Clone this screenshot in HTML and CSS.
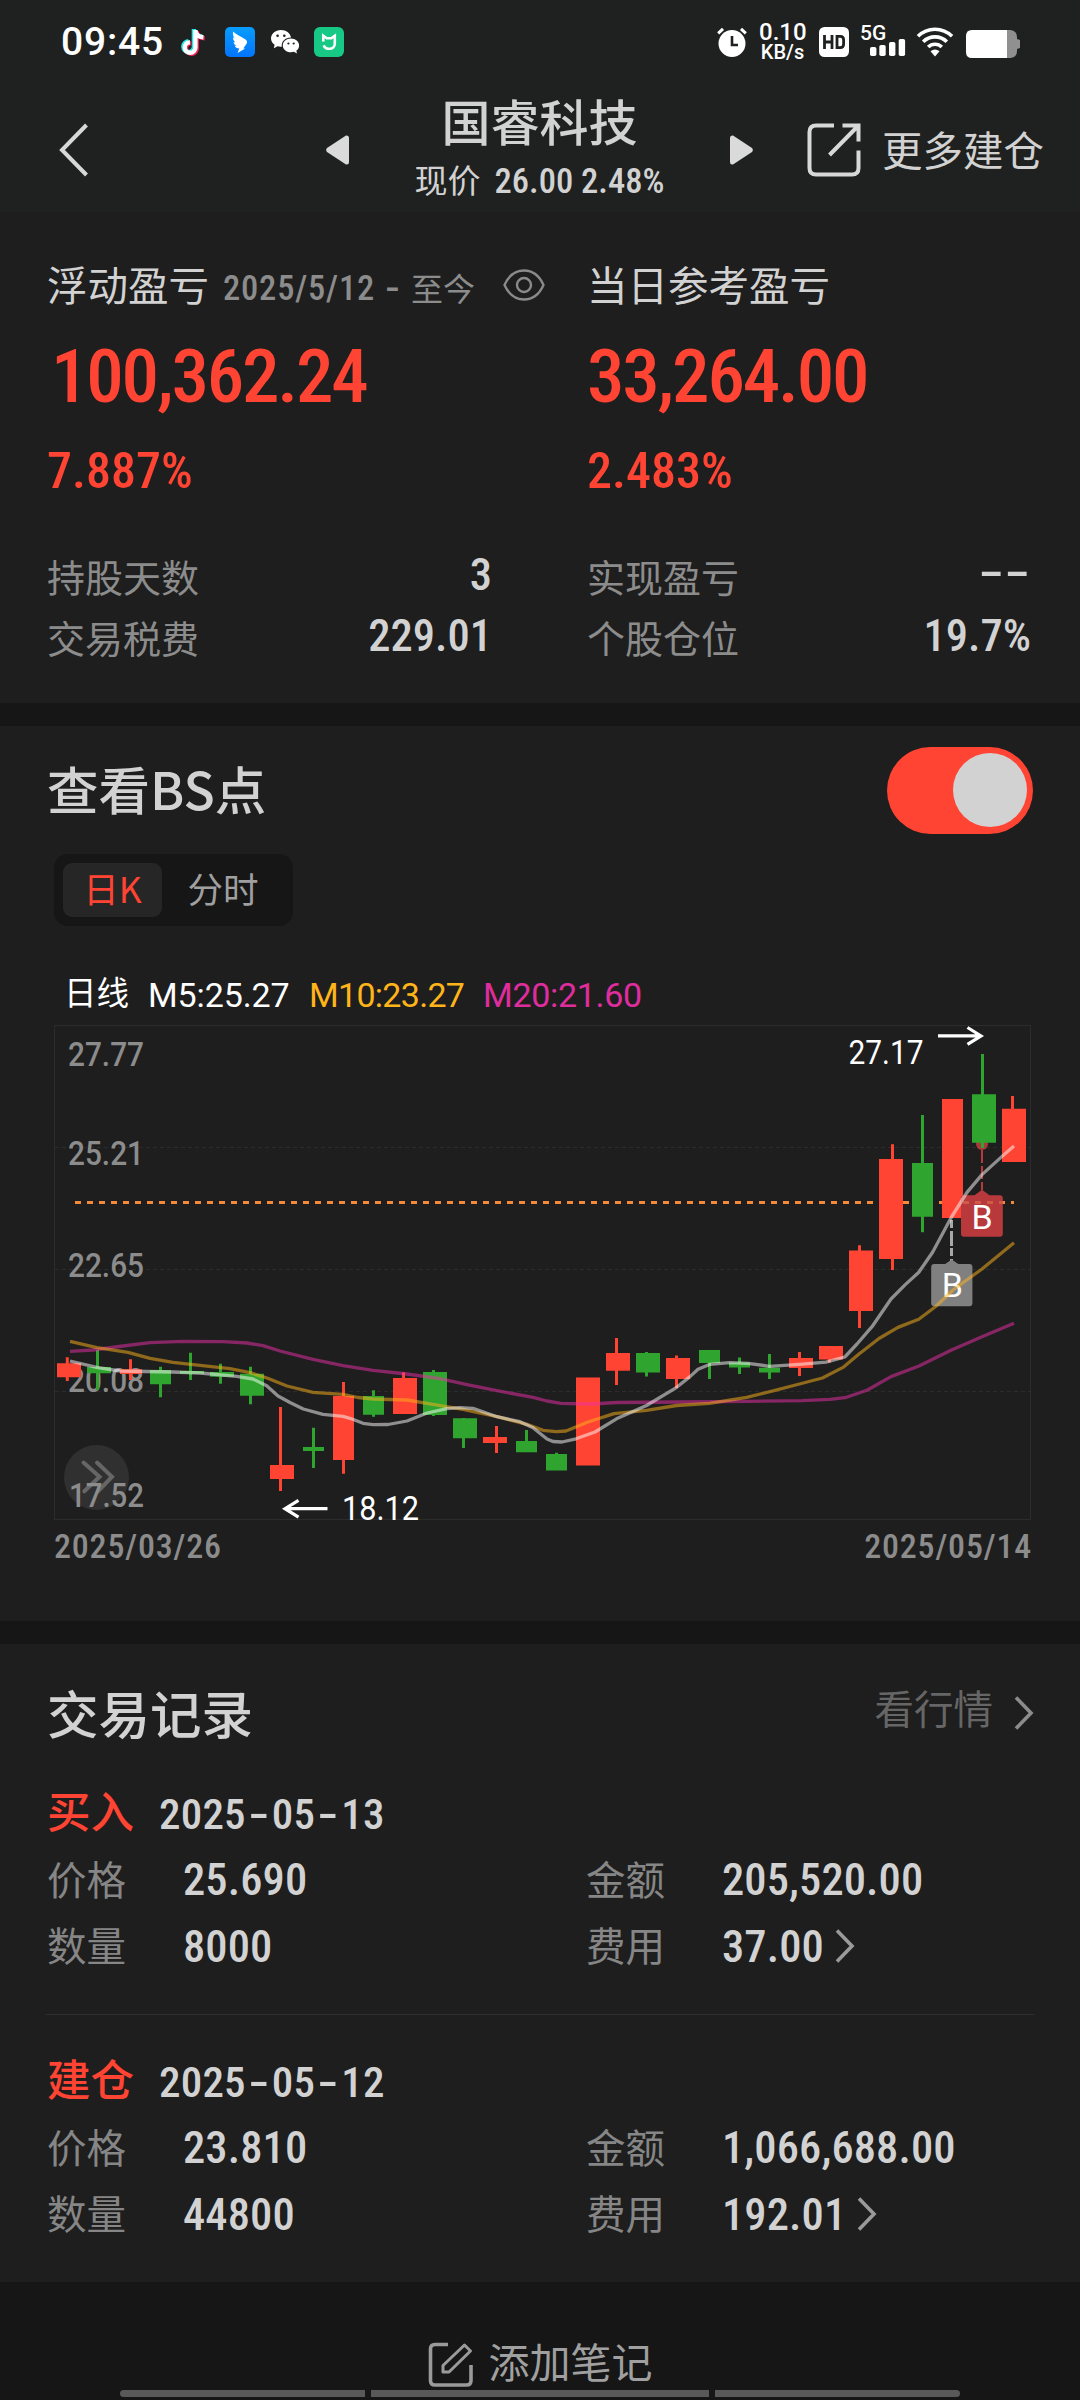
FILE: index.html
```html
<!DOCTYPE html>
<html lang="zh-CN">
<head>
<meta charset="utf-8">
<title>国睿科技</title>
<link rel="stylesheet" href="styles.css">
</head>
<body>
<header class="top">
  <div class="status">
    <span class="clock">09:45</span>
    <div class="apps">
      <svg width="26" height="29" viewBox="0 0 26 29"><g fill="none" stroke-width="4.4"><path d="M13.5 1.5V19a5.3 5.3 0 1 1-5.5-5.3M13.5 2c.5 4 3.500 6.500 8 6.800" stroke="#20e8e6" transform="translate(-.6 -.4)"/><path d="M13.500 1.500V19a5.300 5.300 0 1 1-5.500-5.300M13.500 2c.5 4 3.500 6.500 8 6.800" stroke="#f5225a" transform="translate(2.200 1.400)"/><path d="M13.500 1.500V19a5.300 5.300 0 1 1-5.500-5.300M13.500 2c.5 4 3.500 6.500 8 6.800" stroke="#fff" transform="translate(.9 .5)"/></g></svg>
      <svg width="30" height="30" viewBox="0 0 30 30"><defs><linearGradient id="blue" x2="0" y2="1"><stop stop-color="#079dfd"/><stop offset="1" stop-color="#0474fb"/></linearGradient></defs><rect width="30" height="30" rx="5" fill="url(#blue)"/><path d="M8 4.500c3 2.800 8 5 12.200 7.700 1.800 1.200 2.400 2.600 1.500 4.400l-3.400 5h2L12.500 26l1.800-4.400c-2.200-.3-3.800-1.200-4.600-2.900l2 .2c-1.800-.9-2.900-2.200-3.200-4l2 .7C8.700 14 7.900 12.400 8 10.300l1.700 1.200C8.200 9.500 7.700 7 8 4.500z" fill="#fff"/></svg>
      <svg width="30" height="26" viewBox="0 0 30 26"><path d="M11 1C5.300 1 1 4.800 1 9.400c0 2.600 1.400 4.800 3.600 6.400l-.8 3.400 3.800-2c1.100.3 2.200.5 3.400.5h.8C11 12.500 15.200 8.600 21 8.500 20.300 4.100 16.200 1 11 1z" fill="#fff"/><path d="M21 9.600c-4.700 0-8.200 3-8.200 6.800s3.500 6.800 8.200 6.800c1 0 2-.2 2.900-.4l3.100 1.700-.7-2.800c1.800-1.300 2.800-3.200 2.800-5.300 0-3.800-3.600-6.800-8.100-6.800z" fill="#fff"/><g fill="#1f2120"><circle cx="7.600" cy="6.800" r="1.300"/><circle cx="14.300" cy="6.800" r="1.300"/><circle cx="18.400" cy="14.500" r="1.100"/><circle cx="23.700" cy="14.500" r="1.100"/></g></svg>
      <svg width="30" height="30" viewBox="0 0 30 30"><rect width="30" height="30" rx="6" fill="#17c985"/><path d="M9.300 14.500V8.700l3.500 2.500h4.500l3.500-2.500v8.100a5 5 0 0 1-5 5h-1.600a5 5 0 0 1-4.500-3.400" fill="none" stroke="#fff" stroke-width="2.600"/></svg>
    </div>
    <div class="system">
      <svg width="30" height="30" viewBox="0 0 30 30"><circle cx="15" cy="16.500" r="13.500" fill="#fff"/><path d="M1.200 6.400 6 1.800M28.800 6.400 24 1.800" stroke="#fff" stroke-width="3"/><path d="M15 9v9h6" fill="none" stroke="#1f2120" stroke-width="2.600"/></svg>
      <div class="speed"><span>0.10</span><span class="unit">KB/s</span></div>
      <svg class="hd" width="30" height="30" viewBox="0 0 30 30"><rect width="30" height="30" rx="5.500" fill="#fff"/><path d="M5.500 8v14M13 8v14M5.500 15H13M18 9.400h3.300q3.300 0 3.300 3.300v4.600q0 3.300-3.300 3.300H18z" fill="none" stroke="#1f2120" stroke-width="2.800"/></svg>
      <div class="signal"><span>5G</span><svg width="36" height="17" viewBox="0 0 36 17"><g fill="#fff"><rect x="0" y="8" width="6.400" height="9" rx="1.800"/><rect x="9.300" y="6" width="6.400" height="11" rx="1.800"/><rect x="19" y="3" width="6.400" height="14" rx="1.800"/><rect x="28.700" y="0" width="6.400" height="17" rx="1.800"/></g></svg></div>
      <svg class="wifi" width="38" height="30" viewBox="0 0 38 30"><g fill="none" stroke="#fff" stroke-width="3.600"><path d="M2 9.300a24 24 0 0 1 34 0"/><path d="M7.200 14.800a16.500 16.500 0 0 1 23.600 0"/><path d="M12.200 20a9.600 9.600 0 0 1 13.600 0"/></g><path d="M14.500 24.300q4.500-3.800 9 0L19 29.500z" fill="#fff"/></svg>
      <svg class="battery" width="54" height="28" viewBox="0 0 54 28"><path d="M41 0h3.500Q51 .8 51 7v2l3 1v8l-3 1v2q0 6.200-6.500 7H41z" fill="#8f908f"/><path d="M41 0H6Q0 0 0 6v16q0 6 6 6h35z" fill="#fff"/></svg>
    </div>
  </div>
  <nav class="nav">
    <svg class="back" width="30" height="54" viewBox="0 0 30 54"><path d="M27.500 2 3 27l24.500 25" fill="none" stroke="#d8d8d8" stroke-width="4"/></svg>
    <div class="stock">
      <svg width="24" height="30" viewBox="0 0 24 30"><path d="M1 13 20 .6Q23 0 23 3v24q0 3-3 2.400L1 17q-1.600-2 0-4z" fill="#dadada"/></svg>
      <div class="stock-name">
        <h1>国睿科技</h1>
        <p><span>现价</span><span class="num quote">26.00 2.48%</span></p>
      </div>
      <svg width="24" height="30" viewBox="0 0 24 30"><path d="M23 13 4 .6Q1 0 1 3v24q0 3 3 2.400L23 17q1.600-2 0-4z" fill="#dadada"/></svg>
    </div>
    <div class="more">
      <svg width="54" height="54" viewBox="0 0 54 54"><g fill="none" stroke="#d8d8d8" stroke-width="4"><path d="M27 2.500H9Q2.500 2.500 2.500 9v36q0 6.500 6.500 6.500h36q6.500 0 6.500-6.500V27.500"/><path d="M35.500 2.500H51.500V18.500M51 3 22.500 32"/></g></svg>
      <span>更多建仓</span>
    </div>
  </nav>
</header>

<main>
  <section class="overview">
    <div class="column">
      <div class="caption"><span>浮动盈亏</span><span class="since"><span class="num">2025/5/12</span><span class="dash num">-</span><span>至今</span></span>
        <svg class="eye" width="42" height="32" viewBox="0 0 42 32"><g fill="none" stroke="#8a8a8a" stroke-width="2.400"><path d="M1.500 16C6 6 13 1.500 21 1.500S36 6 40.500 16C36 26 29 30.500 21 30.500S6 26 1.500 16z"/><circle cx="21" cy="16" r="7"/></g></svg>
      </div>
      <div class="num profit indent">100,362.24</div>
      <div class="num percent">7.887%</div>
      <div class="fact"><span>持股天数</span><span class="num value">3</span></div>
      <div class="fact"><span>交易税费</span><span class="num value">229.01</span></div>
    </div>
    <div class="column">
      <div class="caption"><span>当日参考盈亏</span></div>
      <div class="num profit">33,264.00</div>
      <div class="num percent">2.483%</div>
      <div class="fact"><span>实现盈亏</span><span class="num value none">--</span></div>
      <div class="fact"><span>个股仓位</span><span class="num value">19.7%</span></div>
    </div>
  </section>

  <section class="points">
    <div class="points-head"><h2>查看BS点</h2><div class="switch"><i></i></div></div>
    <div class="tabs"><span class="tab on">日K</span><span class="tab">分时</span></div>
    <div class="legend"><span class="period">日线</span><span class="m5">M5:25.27</span><span class="m10">M10:23.27</span><span class="m20">M20:21.60</span></div>
    <svg class="chart" width="978" height="496" viewBox="54 1025 978 496">
      <g class="grid">
        <rect x="54.500" y="1025.500" width="976" height="494"/>
        <path stroke-dasharray="4 3" d="M55 1147.500H1030M55 1269.500H1030M55 1391.500H1030"/>
      </g>
      <g class="axis">
        <text x="68" y="1066" textLength="76" lengthAdjust="spacingAndGlyphs">27.77</text>
        <text x="68" y="1165" textLength="76" lengthAdjust="spacingAndGlyphs">25.21</text>
        <text x="68" y="1277" textLength="76" lengthAdjust="spacingAndGlyphs">22.65</text>
        <text x="68" y="1391.500" textLength="76" lengthAdjust="spacingAndGlyphs">20.08</text>
      </g>
      <path class="cost" d="M75 1202.400H1014"/>
      <g class="up">
        <path d="M67.300 1357.300V1381M130.500 1359.300V1380M280.500 1407V1491M343.500 1382V1473.700M403.500 1372.300V1414M496.500 1426V1453M616.500 1338V1385M676.500 1355.500V1388M799.500 1352V1376M829.500 1346V1362.500M859.500 1245.300V1328M892.500 1144.300V1270M1012.500 1096V1162"/>
        <path class="body" d="M57 1363.300h24v14h-24zM120 1369.300h22v4.700h-22zM270 1465h24v14h-24zM333 1396h21v64h-21zM393 1378h24v36h-24zM483 1437h24v6h-24zM576 1377.400h24v88h-24zM606 1353h24v17.700h-24zM666 1358h24v21h-24zM789 1358h24v10h-24zM819 1346h24v13.600h-24zM849 1250.500h24v60.500h-24zM879 1159h24v100h-24zM942 1099h21v119h-21zM1002 1108.800h24v53.200h-24z"/>
      </g>
      <circle cx="982" cy="1144" r="6" fill="#a83a3c"/>
      <g class="down">
        <path d="M97.500 1350V1390M160.500 1366.700V1397.300M190.500 1352.700V1380M220.500 1363.700V1383.700M250.500 1366.700V1404.300M313.500 1427.700V1468M373.500 1390.300V1416.700M433.500 1370V1416M463.500 1418V1448M526.500 1430V1452M556.500 1452.800V1470M646.500 1352V1376.600M709.500 1350V1379M739.500 1357.400V1374M769.500 1354V1379M922.500 1115V1232.300M982.500 1054V1148"/>
        <path class="body" d="M87 1367h24v6.300h-24zM150 1370h21v14.300h-21zM180 1371h24v2.700h-24zM210 1372h24v4.700h-24zM240 1373.700h24v22h-24zM303 1447h21v4h-21zM363 1396h21v18.700h-21zM423 1372h24v43h-24zM453 1418.300h24v20h-24zM516 1441h21v11.300h-21zM546 1454h21v16.600h-21zM636 1353h24v19.500h-24zM699 1350h21v13h-21zM729 1362.600h21v4.800h-21zM759 1367.700h21v4.800h-21zM912 1163h21v53.800h-21zM972 1094.300h24v48.500h-24z"/>
      </g>
      <g class="mark-now">
        <path class="stem" d="M982 1150V1190" stroke-dasharray="13 3"/>
        <path class="flag" d="M964 1195.300h10.500l7.500-5.500 7.500 5.500h10.300q3 0 3 3v35.500q0 3-3 3H964q-3 0-3-3v-35.500q0-3 3-3z"/>
        <path class="through" d="M961 1202.400H1003"/>
        <text x="982" y="1228.600">B</text>
      </g>
      <g class="mark-open">
        <path class="stem" d="M951.500 1220V1261" stroke-dasharray="8 3 15 2"/>
        <path class="flag" d="M934.200 1264h11l6.500-4.500 6.500 4.500h11.200q3 0 3 3v36.300q0 3-3 3h-35.200q-3 0-3-3V1267q0-3 3-3z"/>
        <text x="952.300" y="1296.700">B</text>
      </g>
      <g class="average">
        <polyline stroke="#f02daa" points="70,1351.3 93,1350 123,1346 150,1342.700 183,1341.300 223,1341.700 247,1343 263,1345.700 280,1351 313,1359.300 343,1365.700 373,1370.300 407,1374 440,1378.700 467,1384.700 497,1390.700 533,1397.300 547,1401 561,1403.300 592,1404 616.500,1402.500 678,1402 747,1401.400 802,1400.700 830,1399.300 845,1397.700 867,1390.300 891,1376.600 919,1366 951.500,1350 982,1336.700 1014,1323.300"/>
        <polyline stroke="#ffb41a" points="70,1341.3 97,1347.700 128,1352.300 150,1358.300 173,1362.300 200,1365.300 230,1368.700 250,1372.700 267,1378 287,1386 313,1392.300 343,1394.300 358,1397.500 373,1399 407,1400 433,1404.300 463,1409.300 497,1416.700 527,1424.300 543,1430.300 556,1431.700 566,1431 588,1422 614,1413.600 646.500,1410.300 676.700,1405.500 709.500,1403.300 746.600,1397.300 774,1390.700 799.500,1384 822.400,1378 843,1367.400 859,1354 879,1338.500 898,1327.400 918.800,1319.300 936,1306.300 953,1290 982,1269 1014,1242.700"/>
        <polyline stroke="#fff" points="70,1361 96.7,1367.300 120,1371 173,1372 200,1373 236.700,1376.300 253,1379 266.700,1385.700 278,1396 290,1402.500 303.300,1409 323,1414.300 343,1416.300 352,1419 363,1423.300 373,1424.700 388,1424.500 407,1421 427,1413 447,1408.700 460,1407.700 473,1408.300 497,1416.700 520,1421.700 533,1427.700 547,1439 553,1441.500 562,1442 576,1438.800 595,1432 616.500,1418.800 646.500,1405.500 676.700,1387.300 690,1376.600 698,1369.200 709.500,1364.400 729.400,1362.600 748,1363.300 769.500,1366.300 799.500,1364.400 826,1362.200 844.800,1357 857,1344 872,1326.700 891,1299 905,1284.900 918.800,1272.300 932.600,1252.300 951.500,1217 967,1192.400 982,1174.600 1001.500,1156.900 1014,1146"/>
      </g>
      <g class="extreme">
        <path d="M938 1035.900H981M967.500 1027.500 981 1035.900 967.500 1044.300"/>
        <text x="848.500" y="1064" textLength="75" lengthAdjust="spacingAndGlyphs">27.17</text>
        <path d="M327.500 1508.700H285M298.500 1500.300 285 1508.700 298.500 1517.100"/>
        <text x="342" y="1520" textLength="77" lengthAdjust="spacingAndGlyphs">18.12</text>
      </g>
      <circle cx="96.500" cy="1477.500" r="32.500" fill="#303030"/>
      <path class="expand" d="M83.500 1462.500 99.500 1476.700 84.300 1491.300M97 1462.500 112 1476.700 98 1491.300"/>
      <g class="axis"><text x="69" y="1507" textLength="75" lengthAdjust="spacingAndGlyphs">17.52</text></g>
    </svg>
    <div class="range num"><span>2025/03/26</span><span>2025/05/14</span></div>
  </section>

  <section class="records">
    <div class="records-head"><h2>交易记录</h2><span class="link">看行情</span><svg width="20" height="34" viewBox="0 0 20 34"><path d="M2 1.500 17 17 2 32.500" fill="none" stroke="#8c8c8c" stroke-width="3.600"/></svg></div>
    <article class="record">
      <div class="record-head"><b>买入</b><span class="num">2025<i class="hy">-</i>05<i class="hy">-</i>13</span></div>
      <dl>
        <div><dt>价格</dt><dd class="num">25.690</dd></div><div><dt>金额</dt><dd class="num">205,520.00</dd></div>
        <div><dt>数量</dt><dd class="num">8000</dd></div><div><dt>费用</dt><dd class="num">37.00</dd><svg width="20" height="34" viewBox="0 0 20 34"><path d="M2 1.500 17 17 2 32.500" fill="none" stroke="#9a9a9a" stroke-width="3.600"/></svg></div>
      </dl>
    </article>
    <article class="record">
      <div class="record-head"><b>建仓</b><span class="num">2025<i class="hy">-</i>05<i class="hy">-</i>12</span></div>
      <dl>
        <div><dt>价格</dt><dd class="num">23.810</dd></div><div><dt>金额</dt><dd class="num">1,066,688.00</dd></div>
        <div><dt>数量</dt><dd class="num">44800</dd></div><div><dt>费用</dt><dd class="num">192.01</dd><svg width="20" height="34" viewBox="0 0 20 34"><path d="M2 1.500 17 17 2 32.500" fill="none" stroke="#9a9a9a" stroke-width="3.600"/></svg></div>
      </dl>
    </article>
  </section>
</main>

<footer class="note">
  <div class="add"><svg width="46" height="46" viewBox="0 0 46 46"><g fill="none" stroke="#9a9a9a" stroke-width="3.600"><path d="M20 3.500H7Q2.500 3.500 2.500 8v31.500Q2.500 44 7 44h31.500q4.500 0 4.500-4.500V24"/><path d="M15 31v-6.500L36.500 4l6 6L21 31z" stroke-width="3" stroke-linejoin="round"/></g></svg><span>添加笔记</span></div>
  <div class="gesture"><i></i><i></i><i></i></div>
</footer>
</body>
</html>
```
FILE: styles.css
```css
* { box-sizing: border-box; }
body {
  margin: 0;
  width: 1080px;
  height: 2400px;
  overflow: hidden;
  background: #161616;
  color: #d2d2d2;
  font-family: "Noto Sans CJK SC", sans-serif;
}
h1, h2, p, dl, dd { margin: 0; }
h1, h2 { font-weight: 500; }
i, b { font-style: normal; }
svg { display: block; flex: none; }
span { white-space: nowrap; }
.num { font-family: "Roboto Condensed", Roboto, sans-serif; font-weight: 500; white-space: nowrap; }

/* status bar and title */
.top { height: 212px; background: #1f2120; }
.status { display: flex; align-items: center; height: 84px; padding: 0 60px 0 61px; color: #fff; font-family: Roboto, sans-serif; font-weight: 500; }
.clock { width: 120px; font-size: 39px; letter-spacing: .8px; }
.apps { display: flex; align-items: center; gap: 15px; }
.apps svg:first-child { margin-right: 3px; }
.apps svg:last-child { margin-left: -1px; }
.system { display: flex; align-items: center; margin-left: auto; }
.speed { display: flex; flex-direction: column; width: 47px; margin: 0 13px 0 12px; font-size: 24px; line-height: 20px; text-align: center; }
.speed .unit { font-size: 20px; }
.signal { display: flex; flex-direction: column; width: 46px; margin: -2px 10px 0 11px; font-size: 21px; line-height: 14px; }
.signal svg { margin: -1px 0 0 10px; }
.battery { margin: 4px 0 0 12px; }
.nav { display: grid; grid-template-columns: 326px 427px 1fr; align-items: center; height: 128px; }
.back { margin: 4px 0 0 59px; }
.stock { display: flex; align-items: center; justify-content: space-between; }
.stock > svg { margin-top: 4px; }
.stock-name { text-align: center; }
.stock-name h1 { margin-top: 1px; font-size: 49px; line-height: 58px; }
.stock-name p { display: flex; align-items: baseline; justify-content: center; gap: 14px; padding-top: 4px; font-size: 33px; line-height: 52px; }
.quote { font-size: 34.500px; }
.more { display: flex; align-items: center; gap: 21px; margin: 4px 0 0 54px; font-size: 40.500px; }
.more span { line-height: 60px; margin-top: -3px; }

/* profit overview */
.overview { display: grid; grid-template-columns: 445px 444px; column-gap: 95px; height: 491px; padding: 42px 49px 0 47px; background: #1e1e1e; }
.caption { display: flex; align-items: center; height: 60px; font-size: 40.500px; line-height: 60px; }
.caption > span { margin-top: -1px; }
.caption .since { display: flex; align-items: center; margin: 5px 0 0 14px; color: #8c8c8c; font-size: 32px; }
.since .num { padding-top: 2px; font-size: 34.500px; letter-spacing: .8px; }
.since .dash { width: 36px; text-align: center; transform: scaleX(1.400); }
.eye { margin: 2px 0 0 28px; }
.profit { height: 80px; margin-top: 22px; color: #ff4433; font-size: 75px; line-height: 80px; letter-spacing: -2.200px; }
.indent { padding-left: 4px; }
.percent { height: 56px; margin: 27px 0 46px; color: #ff4433; font-size: 50px; line-height: 56px; }
.fact { display: flex; align-items: center; justify-content: space-between; height: 61px; color: #8c8c8c; font-size: 38px; line-height: 61px; }
.value { padding-bottom: 2px; color: #d2d2d2; font-size: 44.500px; line-height: 56px; }
.none { margin-top: -5px; transform: scaleX(1.900); transform-origin: right; }

/* chart */
.points { height: 895px; margin-top: 23px; padding: 20px 47px 0; background: #1e1e1e; }
.points-head { display: flex; align-items: center; justify-content: space-between; height: 88px; }
h2 { margin-top: -5px; font-size: 51.500px; line-height: 88px; }
.switch { display: flex; justify-content: flex-end; align-items: center; width: 146px; height: 87px; padding-right: 6px; border-radius: 44px; background: #ff4433; }
.switch i { width: 74px; height: 74px; border-radius: 50%; background: #d2d2d2; }
.tabs { display: flex; width: 239px; height: 72px; margin: 20px 0 0 7px; padding: 9px; border-radius: 14px; background: #161616; }
.tab { width: 99px; height: 54px; border-radius: 9px; color: #a0a0a0; font-size: 35.500px; line-height: 49px; text-align: center; }
.tab.on { background: #262626; color: #ff4433; }
.tab + .tab { width: 122px; }
.legend { display: flex; align-items: center; height: 60px; margin: 39px 0 0 17px; color: #fff; font-family: Roboto, "Noto Sans CJK SC", sans-serif; font-size: 34px; line-height: 60px; letter-spacing: -.1px; }
.period { width: 84px; margin-top: -2px; font-size: 32.500px; }
.m5 { width: 161px; }
.m10 { width: 174px; color: #ffb41a; letter-spacing: -.7px; }
.m20 { color: #e02d9e; letter-spacing: -.3px; }
.chart { margin-left: 7px; }
.grid { fill: none; stroke: #2c2c2c; stroke-width: 1; }
.axis { fill: #8c8c8c; font: 500 33.500px Roboto, sans-serif; }
.cost { stroke: #f5893a; stroke-width: 3; stroke-dasharray: 6 6; }
.up { fill: none; stroke: #ff4433; stroke-width: 3; }
.up .body { fill: #ff4433; stroke: none; }
.down { fill: none; stroke: #2fa52f; stroke-width: 3; }
.down .body { fill: #2fa52f; stroke: none; }
.average polyline { fill: none; stroke-width: 3.300; stroke-linejoin: round; opacity: .5; }
.mark-now .flag { fill: #b8393c; }
.mark-now .stem { stroke: #b8393c; stroke-width: 2; }
.mark-now .through { stroke: #cf5a48; stroke-width: 3; stroke-dasharray: 6 6; stroke-dashoffset: 10; }
.mark-open .flag { fill: #808080; }
.mark-open .stem { stroke: #a8a8a8; stroke-width: 3; }
.mark-now text, .mark-open text { fill: #fff; font: 400 34px Roboto, sans-serif; text-anchor: middle; }
.extreme { fill: none; stroke: #fff; stroke-width: 3.200; }
.extreme text { fill: #fff; stroke: none; font: 400 34px Roboto, sans-serif; }
.expand { fill: none; stroke: #666; stroke-width: 4; stroke-linecap: round; }
.range { display: flex; justify-content: space-between; padding: 0 1px 0 7px; color: #8c8c8c; font-size: 34px; letter-spacing: .8px; line-height: 50px; }

/* trade records */
.records { height: 638px; margin-top: 23px; padding: 25px 46px 0; background: #1e1e1e; }
.records-head { display: flex; align-items: center; height: 88px; }
.records-head h2 { margin-top: -2px; padding-left: 1px; }
.link { margin: 0 21px 12px auto; color: #666; font-size: 39.500px; line-height: 60px; }
.record + .record { border-top: 1px solid #303030; margin-top: 35px; padding-top: 30px; }
.record-head { display: flex; align-items: center; height: 68px; margin-top: 20px; }
.record + .record .record-head { margin-top: 0; }
.record-head b { width: 113px; margin-top: -2px; padding-left: 1px; color: #ff4433; font-size: 43.500px; font-weight: 500; line-height: 60px; }
.record-head .num { padding-top: 5px; font-size: 43px; letter-spacing: .2px; }
.hy { display: inline-block; width: 26px; text-align: center; transform: scaleX(1.600); }
dl { display: grid; grid-template-columns: 539px 1fr; margin-top: 1px; }
dl > div { display: flex; align-items: center; height: 66.500px; }
dt { width: 137px; margin-top: -3px; padding-left: 1px; color: #868686; font-size: 39.500px; line-height: 60px; }
dd { padding-top: 3px; font-size: 44.500px; line-height: 57px; letter-spacing: .1px; }
dl svg { margin-left: 11px; }

/* bottom bar */
.note { display: flex; flex-direction: column; align-items: center; height: 118px; }
.add { display: flex; align-items: center; gap: 15px; height: 50px; margin-top: 53px; color: #a0a0a0; font-size: 41px; line-height: 50px; }
.add svg { margin-top: 8px; }
.gesture { display: flex; gap: 6px; width: 840px; height: 7px; margin-top: 5px; border-radius: 4px; overflow: hidden; }
.gesture i { width: 245px; background: #595959; }
.gesture i:nth-child(2) { width: 338px; }
```
